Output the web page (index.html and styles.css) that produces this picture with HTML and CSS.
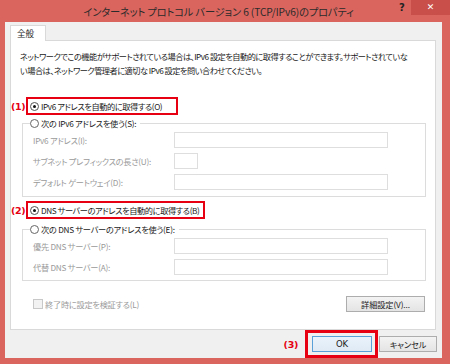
FILE: index.html
```html
<!DOCTYPE html>
<html lang="ja">
<head>
<meta charset="utf-8">
<link rel="stylesheet" href="styles.css">
</head>
<body>
<div class="window">
  <div class="titlebar">
    <div class="title">インターネット プロトコル バージョン 6 (TCP/IPv6)のプロパティ</div>
    <div class="help">?</div>
    <div class="close">✕</div>
  </div>
  <div class="client">
    <div class="tabs"><div class="tab">全般</div></div>
    <div class="panel">
      <p class="desc">ネットワークでこの機能がサポートされている場合は、IPv6 設定を自動的に取得することができます。サポートされていな<br>い場合は、ネットワーク管理者に適切な IPv6 設定を問い合わせてください。</p>

      <div class="mark-row mark-row-1">
        <span class="mark">(1)</span>
        <div class="redbox">
          <span class="radio checked"></span><span class="opt">IPv6 アドレスを自動的に取得する(O)</span>
        </div>
      </div>

      <div class="group group-1">
        <div class="legend"><span class="radio"></span><span class="opt">次の IPv6 アドレスを使う(S):</span></div>
        <div class="field"><span class="flabel">IPv6 アドレス(I):</span><span class="input"></span></div>
        <div class="field"><span class="flabel">サブネット プレフィックスの長さ(U):</span><span class="input small"></span></div>
        <div class="field"><span class="flabel">デフォルト ゲートウェイ(D):</span><span class="input"></span></div>
      </div>

      <div class="mark-row mark-row-2">
        <span class="mark">(2)</span>
        <div class="redbox">
          <span class="radio checked"></span><span class="opt">DNS サーバーのアドレスを自動的に取得する(B)</span>
        </div>
      </div>

      <div class="group group-2">
        <div class="legend"><span class="radio"></span><span class="opt">次の DNS サーバーのアドレスを使う(E):</span></div>
        <div class="field"><span class="flabel">優先 DNS サーバー(P):</span><span class="input"></span></div>
        <div class="field"><span class="flabel">代替 DNS サーバー(A):</span><span class="input"></span></div>
      </div>

      <div class="bottom-row">
        <div class="check"><span class="checkbox"></span><span>終了時に設定を検証する(L)</span></div>
        <div class="btn adv">詳細設定(V)...</div>
      </div>
    </div>
    <div class="footer">
      <span class="mark mark-3">(3)</span>
      <div class="redbox-ok"><div class="btn ok">OK</div></div>
      <div class="btn cancel">キャンセル</div>
    </div>
  </div>
</div>
</body>
</html>
```

FILE: styles.css
```css
* { box-sizing: border-box; }
html, body { margin: 0; padding: 0; }
body {
  width: 450px;
  height: 364px;
  overflow: hidden;
  font-family: "Noto Sans CJK JP", "Noto Sans", sans-serif;
  font-feature-settings: "palt";
  color: #1a1a1a;
}
.window {
  width: 450px;
  height: 364px;
  background: #da655e;
  display: flex;
  flex-direction: column;
  padding: 0 8px 6px 5px;
}
.titlebar {
  height: 22px;
  display: flex;
  align-items: flex-start;
  margin-right: -8px;
}
.title {
  flex: 1;
  text-align: center;
  font-size: 10.2px;
  letter-spacing: -0.1px;
  line-height: 23px;
  color: #2b2b2b;
  padding-left: 46px;
  padding-right: 8px;
  white-space: nowrap;
}
.help {
  width: 16px;
  height: 15px;
  font-family: "DejaVu Sans", sans-serif;
  font-weight: bold;
  font-size: 10px;
  line-height: 15px;
  text-align: center;
  color: #222;
  margin-right: 1px;
}
.close {
  width: 39px;
  height: 15px;
  background: #c84f4a;
  color: #fff;
  font-family: "DejaVu Sans", sans-serif;
  font-weight: bold;
  font-size: 9px;
  line-height: 15px;
  text-align: center;
}
.client {
  flex: 1;
  background: #f0f0f0;
  display: flex;
  flex-direction: column;
  padding: 2px 6px 0 5px;
}
.tabs {
  height: 16px;
  display: flex;
  align-items: flex-end;
}
.tab {
  width: 36px;
  height: 16px;
  background: #fff;
  border: 1px solid #d9d9d9;
  border-bottom: none;
  font-size: 8.6px;
  line-height: 15px;
  padding-left: 6px;
  margin-bottom: -1px;
  position: relative;
  z-index: 1;
}
.panel {
  height: 290px;
  background: #fff;
  border: 1px solid #d9d9d9;
  font-size: 8.2px;
  letter-spacing: -0.25px;
  padding: 8px 0 0 0;
  display: flex;
  flex-direction: column;
}
.desc {
  margin: 0 0 0 9px;
  line-height: 14px;
  letter-spacing: -0.5px;
  color: #1a1a1a;
  white-space: nowrap;
}
.mark-row {
  display: flex;
  align-items: center;
  height: 18px;
}
.mark-row-1 { margin-top: 20px; }
.mark-row-2 { margin-top: 4px; }
.mark {
  width: 15px;
  font-family: "DejaVu Sans", "Noto Sans CJK JP", sans-serif;
  font-weight: bold;
  font-size: 9.5px;
  color: #e50012;
  letter-spacing: -0.3px;
  background: #fff;
}
.redbox {
  height: 18px;
  border: 2px solid #e60012;
  display: flex;
  align-items: center;
  padding: 0 4px 0 2px;
}
.redbox .opt { letter-spacing: -0.4px; }
.mark-row-1 .redbox { width: 152px; }
.mark-row-2 .redbox { width: 179px; }
.radio {
  width: 9px;
  height: 9px;
  border-radius: 50%;
  border: 1px solid #555;
  background: #fff;
  margin-right: 2px;
  display: inline-flex;
  align-items: center;
  justify-content: center;
  flex: none;
}
.radio.checked::after {
  content: "";
  width: 3px;
  height: 3px;
  border-radius: 50%;
  background: #111;
}
.opt { white-space: nowrap; line-height: 14px; }
.group {
  margin: 0 9px 0 11px;
  border: 1px solid #dcdcdc;
  display: flex;
  flex-direction: column;
  gap: 5px;
  padding: 0 0 6px 10px;
}
.group-1 { margin-top: 8px; }
.group-2 { margin-top: 10px; padding-bottom: 5px; }
.legend {
  display: inline-flex;
  align-items: center;
  align-self: flex-start;
  margin: -8px 0 -3px -3px;
  padding: 0 4px 0 0;
  height: 14px;
  background: #fff;
}
.legend .radio { border-color: #666; }
.field {
  display: flex;
  align-items: center;
  height: 16px;
}
.flabel {
  width: 141px;
  color: #9a9a9a;
  white-space: nowrap;
}
.input {
  width: 214px;
  height: 16px;
  border: 1px solid #dedede;
  background: #fff;
}
.input.small { width: 24px; }
.bottom-row {
  margin: 15px 10px 0 22px;
  display: flex;
  align-items: center;
  justify-content: space-between;
  height: 16px;
}
.check {
  display: flex;
  align-items: center;
  color: #9a9a9a;
}
.checkbox {
  width: 10px;
  height: 10px;
  border: 1px solid #c8c8c8;
  background: #f2f2f2;
  margin-right: 2px;
}
.btn {
  height: 16px;
  border: 1px solid #adadad;
  background: linear-gradient(#f3f3f3, #e4e4e4);
  display: flex;
  align-items: center;
  justify-content: center;
  font-size: 8.2px;
  letter-spacing: -0.1px;
  color: #1a1a1a;
}
.adv { width: 79px; }
.footer {
  flex: 1;
  display: flex;
  align-items: center;
  justify-content: flex-end;
  margin-right: -1px;
}
.mark-3 {
  width: auto;
  background: none;
  margin-right: 7px;
}
.redbox-ok {
  width: 73px;
  height: 28px;
  border: 3px solid #e60012;
  padding: 0 3px 0 4px;
  display: flex;
  align-items: center;
  margin-right: 1px;
}
.ok {
  width: 60px;
  border-color: #5aa0d8;
  background: linear-gradient(#eaf3fb, #dfeaf5);
  font-family: "DejaVu Sans", sans-serif;
  font-size: 8.5px;
}
.cancel { width: 58px; }
```
